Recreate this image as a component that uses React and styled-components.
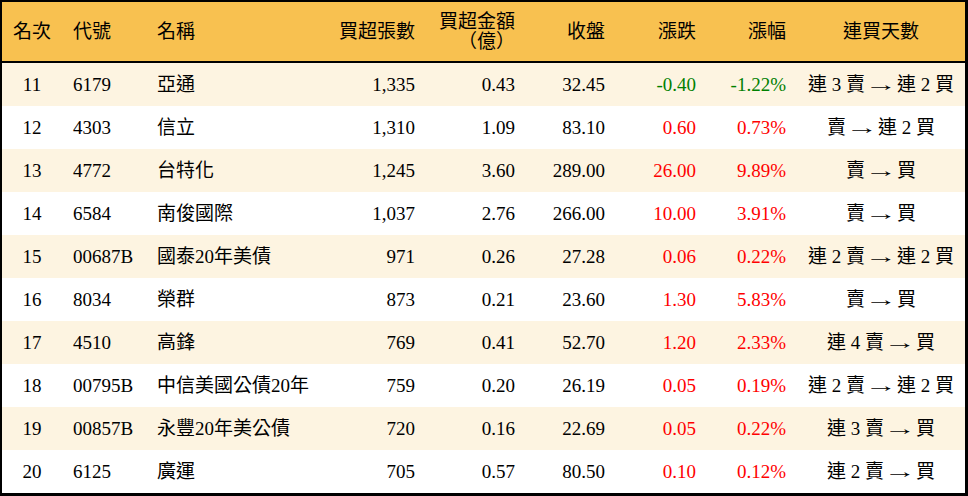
import React from "react";
import styled, { createGlobalStyle } from "styled-components";

const GlobalStyle = createGlobalStyle`
  html, body {
    margin: 0;
    padding: 0;
    background: #fff;
  }
  body {
    font-family: "Liberation Serif", "Noto Sans CJK TC", serif;
    color: #000;
  }
`;

const COLUMNS = "60px 84px 174px 106px 100px 90px 91px 90px 168px";

const Table = styled.div`
  width: 968px;
  height: 496px;
  box-sizing: border-box;
  border: 2px solid #000;
  border-right-width: 3px;
  border-bottom-width: 3px;
  display: flex;
  flex-direction: column;
  font-size: 19px;
`;

const HeaderRow = styled.div`
  display: grid;
  grid-template-columns: ${COLUMNS};
  align-items: center;
  height: 59px;
  background: #f8c150;
  border-bottom: 2px solid #000;
  line-height: 20px;
`;

const Row = styled.div`
  display: grid;
  grid-template-columns: ${COLUMNS};
  align-items: center;
  height: 43px;
  background: ${(props) => (props.$alt ? "#fdf4e1" : "#fff")};
  line-height: 22px;
`;

const Cell = styled.div`
  padding: 0 11px;
  white-space: nowrap;
  text-align: ${(props) => props.$align || "left"};
  color: ${(props) =>
    props.$tone === "up" ? "#ff0000" : props.$tone === "down" ? "#008000" : "#000"};
`;

const Arrow = styled.span`
  display: inline-block;
  width: 22px;
  margin: 0 5px;
  text-align: center;
  transform: scaleX(1.7);
  font-family: "Liberation Serif", serif;
`;

const Streak = ({ text }) => {
  const [from, to] = text.split(" → ");
  return (
    <>
      {from}
      <Arrow>→</Arrow>
      {to}
    </>
  );
};

const rows = [
  ["11", "6179", "亞通", "1,335", "0.43", "32.45", "-0.40", "-1.22%", "連 3 賣 → 連 2 買"],
  ["12", "4303", "信立", "1,310", "1.09", "83.10", "0.60", "0.73%", "賣 → 連 2 買"],
  ["13", "4772", "台特化", "1,245", "3.60", "289.00", "26.00", "9.89%", "賣 → 買"],
  ["14", "6584", "南俊國際", "1,037", "2.76", "266.00", "10.00", "3.91%", "賣 → 買"],
  ["15", "00687B", "國泰20年美債", "971", "0.26", "27.28", "0.06", "0.22%", "連 2 賣 → 連 2 買"],
  ["16", "8034", "榮群", "873", "0.21", "23.60", "1.30", "5.83%", "賣 → 買"],
  ["17", "4510", "高鋒", "769", "0.41", "52.70", "1.20", "2.33%", "連 4 賣 → 買"],
  ["18", "00795B", "中信美國公債20年", "759", "0.20", "26.19", "0.05", "0.19%", "連 2 賣 → 連 2 買"],
  ["19", "00857B", "永豐20年美公債", "720", "0.16", "22.69", "0.05", "0.22%", "連 3 賣 → 買"],
  ["20", "6125", "廣運", "705", "0.57", "80.50", "0.10", "0.12%", "連 2 賣 → 買"],
];

export default function App() {
  return (
    <>
      <GlobalStyle />
      <Table>
        <HeaderRow>
          <Cell $align="center">名次</Cell>
          <Cell>代號</Cell>
          <Cell>名稱</Cell>
          <Cell $align="right">買超張數</Cell>
          <Cell $align="right">
            買超金額
            <br />
            （億）
          </Cell>
          <Cell $align="right">收盤</Cell>
          <Cell $align="right">漲跌</Cell>
          <Cell $align="right">漲幅</Cell>
          <Cell $align="center">連買天數</Cell>
        </HeaderRow>
        {rows.map((r, i) => {
          const tone = r[6].startsWith("-") ? "down" : "up";
          return (
            <Row key={r[0]} $alt={i % 2 === 0}>
              <Cell $align="center">{r[0]}</Cell>
              <Cell>{r[1]}</Cell>
              <Cell>{r[2]}</Cell>
              <Cell $align="right">{r[3]}</Cell>
              <Cell $align="right">{r[4]}</Cell>
              <Cell $align="right">{r[5]}</Cell>
              <Cell $align="right" $tone={tone}>{r[6]}</Cell>
              <Cell $align="right" $tone={tone}>{r[7]}</Cell>
              <Cell $align="center">
                <Streak text={r[8]} />
              </Cell>
            </Row>
          );
        })}
      </Table>
    </>
  );
}
